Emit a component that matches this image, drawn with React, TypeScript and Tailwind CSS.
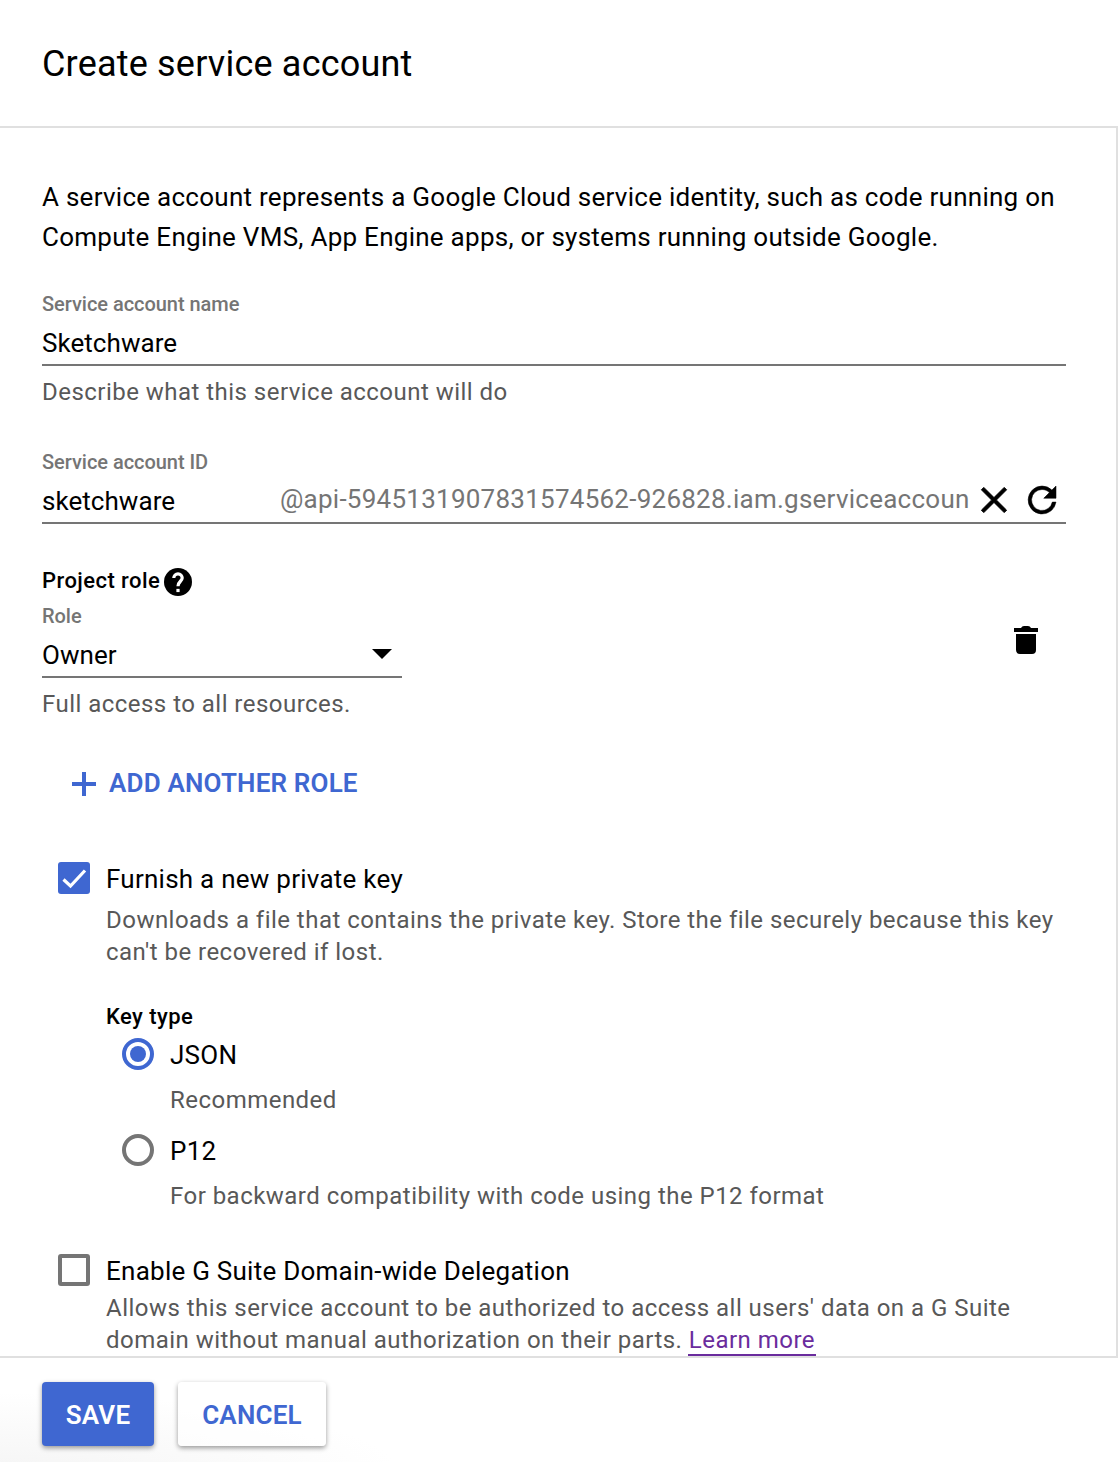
import React from "react";

const help = "text-[24px] leading-8 tracking-[0.47px] text-[#585858] whitespace-nowrap";
const input = "text-[26px] leading-8 tracking-[0.05px] whitespace-nowrap";
const option = "text-[26px] leading-8 tracking-[0.25px] whitespace-nowrap";

function Label({ children }: { children: React.ReactNode }) {
  return <div className="whitespace-nowrap text-[20px] font-medium leading-6 tracking-[-0.04px] text-[#757575]">{children}</div>;
}

function Radio({ label, hint, checked }: { label: string; hint: string; checked?: boolean }) {
  return (
    <div className="flex h-24 gap-4">
      <svg width="32" height="32" viewBox="0 0 32 32" className={checked ? "text-[#3f67d1]" : "text-[#757575]"}>
        <circle cx="16" cy="16" r="14" fill="none" stroke="currentColor" strokeWidth="4" />
        {checked && <circle cx="16" cy="16" r="8" fill="currentColor" />}
      </svg>
      <div>
        <div className={`${option} pt-px`}>{label}</div>
        <div className={`${help} mt-[13px]`}>{hint}</div>
      </div>
    </div>
  );
}

export default function App() {
  return (
    <div className="flex h-[1462px] w-[1118px] flex-col overflow-hidden bg-white font-['Roboto',sans-serif] text-black">
      <header className="h-32 shrink-0 border-b-2 border-[#e0e0e0] px-[42px] pt-px">
        <h1 className="text-[36px] leading-[126px] tracking-[0.19px]">Create service account</h1>
      </header>

      <main className="h-[1230px] shrink-0 overflow-hidden border-b-2 border-r-2 border-[#e0e0e0] pl-[42px] pr-[50px] pt-[49px]">
        <p className="whitespace-nowrap text-[26px] leading-10 tracking-[0.265px]">
          A service account represents a Google Cloud service identity, such as code running on
          <br />
          Compute Engine VMS, App Engine apps, or systems running outside Google.
        </p>

        <div className="mt-[35px] h-[158px]">
          <Label>Service account name</Label>
          <div className="mt-[11px] h-[39px] border-b-2 border-[#757575]">
            <div className={input}>Sketchware</div>
          </div>
          <div className={`${help} mt-[10px]`}>Describe what this service account will do</div>
        </div>

        <div className="h-[118px]">
          <Label>Service account ID</Label>
          <div className="mt-[11px] flex h-[39px] border-b-2 border-[#757575]">
            <div className={`${input} w-[238px] shrink-0`}>sketchware</div>
            <div className={`${option} -mt-0.5 w-[690px] shrink-0 overflow-hidden text-[#757575]`}>@api-5945131907831574562-926828.iam.gserviceaccoun</div>
            <svg width="48" height="48" viewBox="0 0 24 24" className="-mt-[9px] shrink-0">
              <path d="M18.3 6.9 17.1 5.7 12 10.8 6.9 5.7 5.7 6.9 10.8 12 5.7 17.1 6.9 18.3 12 13.2 17.1 18.3 18.3 17.1 13.2 12z" stroke="#000" strokeWidth=".5" />
            </svg>
            <svg width="42" height="42" viewBox="0 0 24 24" className="-mt-1.5 ml-[3px] shrink-0">
              <path d="M17.65 6.35A7.96 7.96 0 0 0 12 4a8 8 0 1 0 8 9.2h-2.1A6 6 0 1 1 12 6c1.66 0 3.14.69 4.22 1.78L13 11h7V4z" stroke="#000" strokeWidth=".3" />
            </svg>
          </div>
        </div>

        <div className="flex h-[36px] items-start gap-1">
          <h2 className="whitespace-nowrap pt-px text-[22px] font-medium leading-6 tracking-[0.43px]">Project role</h2>
          <svg width="28" height="28" viewBox="2 2 20 20">
            <path d="M12 2a10 10 0 1 0 0 20 10 10 0 0 0 0-20" />
            <path d="M9 9.2a3 3 0 0 1 6 0c0 2.2-3 2.5-3 5.8" fill="none" stroke="#fff" strokeWidth="2.3" />
            <path d="M10.85 16.9h2.3v2.3h-2.3z" fill="#fff" />
          </svg>
        </div>

        <div className="flex justify-between">
          <div className="w-[360px]">
            <Label>Role</Label>
            <div className="mt-[11px] flex h-[39px] justify-between border-b-2 border-[#757575] pr-[10px]">
              <div className={input}>Owner</div>
              <svg width="20" height="10" viewBox="0 0 20 10" className="mt-[10px]">
                <path d="M0 0h20L10 10z" />
              </svg>
            </div>
            <div className={`${help} mt-[10px]`}>Full access to all resources.</div>
          </div>
          <svg width="24" height="28" viewBox="0 0 24 28" className="mr-7 mt-[22px]">
            <path d="M2 8h20v16a4 4 0 0 1-4 4H6a4 4 0 0 1-4-4zM0 2h7q1-2 3-2h4q2 0 3 2h7v4H0z" />
          </svg>
        </div>

        <div className="mt-[47px] flex items-center gap-[13px] pl-[30px] text-[#3f67d1]">
          <svg width="24" height="24" viewBox="0 0 24 24" className="mt-0.5">
            <path d="M10 0h4v10h10v4H14v10h-4V14H0v-4h10z" fill="currentColor" />
          </svg>
          <div className="whitespace-nowrap text-[26px] font-semibold leading-8 tracking-[0.18px]">ADD ANOTHER ROLE</div>
        </div>

        <div className="mt-[63px] flex gap-4 pl-4">
          <div className="size-8 shrink-0 rounded-[3px] bg-[#3f67d1]">
            <svg width="32" height="32" viewBox="0 0 32 32">
              <path d="m5.5 17.5 7 6.5L27 8.5" fill="none" stroke="#fff" strokeWidth="3.2" />
            </svg>
          </div>
          <div>
            <div className={`${option} pt-px`}>Furnish a new private key</div>
            <div className={`${help} mt-[9px]`}>
              Downloads a file that contains the private key. Store the file securely because this key
              <br />
              can't be recovered if lost.
            </div>
            <h3 className="mt-[35px] text-[22px] font-medium leading-7 tracking-[0.42px]">Key type</h3>
            <div className="mt-[7px] pl-4">
              <Radio label="JSON" hint="Recommended" checked />
              <Radio label="P12" hint="For backward compatibility with code using the P12 format" />
            </div>
          </div>
        </div>

        <div className="mt-6 flex gap-4 pl-4">
          <div className="size-8 shrink-0 rounded-[3px] border-4 border-[#757575]" />
          <div>
            <div className={`${option} pt-px`}>Enable G Suite Domain-wide Delegation</div>
            <div className={`${help} mt-[5px]`}>
              Allows this service account to be authorized to access all users' data on a G Suite
              <br />
              domain without manual authorization on their parts.{" "}
              <a className="-ml-px inline-block h-8 border-b-2 border-[#6a2c9d] px-px text-[#6a2c9d]">Learn more</a>
            </div>
          </div>
        </div>
      </main>

      <footer className="flex h-[104px] shrink-0 gap-6 bg-[radial-gradient(ellipse_400px_80px_at_0%_110%,#f5f5f5,#ffffff)] px-[42px] pt-6">
        <button className="h-16 w-28 rounded-[4px] bg-[#3f67d1] pt-0.5 text-[26px] font-semibold tracking-[0.2px] text-white shadow-[0_2px_5px_rgba(0,0,0,0.4)]">SAVE</button>
        <button className="h-16 w-[148px] rounded-[4px] bg-white/60 pt-0.5 text-[26px] font-semibold tracking-[0.2px] text-[#3f67d1] shadow-[0_2px_5px_rgba(0,0,0,0.4)]">CANCEL</button>
      </footer>
    </div>
  );
}
